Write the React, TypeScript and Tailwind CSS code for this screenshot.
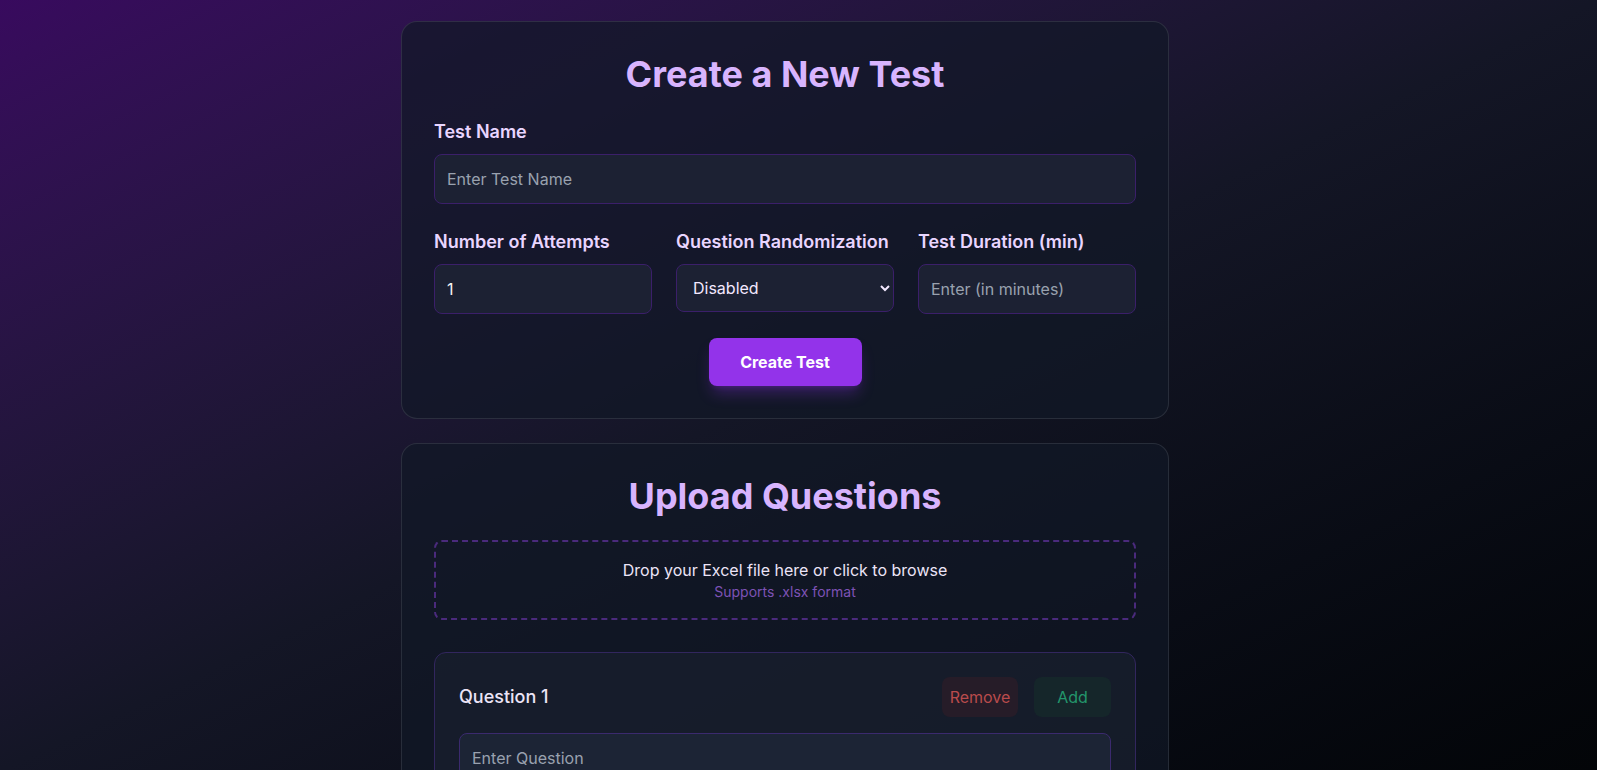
import { useState } from 'react'

const inputCls =
  'w-full rounded-lg border border-[#3b1f6a] bg-[#1c2133] px-3 py-3 text-base text-gray-100 placeholder-gray-400 outline-none'

const labelCls = 'block text-lg font-semibold text-[#e9d5ff] mb-2'

export default function App() {
  // State
  const [testName, setTestName] = useState('')
  const [attempts, setAttempts] = useState('1')
  const [random, setRandom] = useState('disabled')
  const [duration, setDuration] = useState('')
  const [question, setQuestion] = useState('')

  return (
    <div
      className="min-h-screen bg-fixed bg-gradient-to-br from-[#380a5e] via-[#141626] to-[#030508] pr-[27px] pt-[21px] pb-10 flex justify-center"
      style={{ fontFamily: 'Inter, "Noto Sans", sans-serif' }}
    >
      <div className="w-[768px] flex flex-col gap-6">
        {/* Create test card */}
        <div className="rounded-2xl border border-white/10 bg-[#111827]/70 p-8">
          <h1 className="text-4xl font-bold text-[#d8b4fe] text-center mb-6">
            Create a New Test
          </h1>

          <label className={labelCls}>Test Name</label>
          <input
            className={inputCls + ' mb-6'}
            placeholder="Enter Test Name"
            value={testName}
            onChange={(e) => setTestName(e.target.value)}
          />

          <div className="grid grid-cols-3 gap-6 mb-6">
            <div>
              <label className={labelCls}>Number of Attempts</label>
              <input
                type="number"
                className={inputCls}
                value={attempts}
                onChange={(e) => setAttempts(e.target.value)}
              />
            </div>
            <div>
              <label className={labelCls}>Question Randomization</label>
              <select
                className="w-full rounded-lg border border-[#3b1f6a] bg-[#1c2133] px-3 py-3 text-base text-[#f3e8ff] outline-none"
                value={random}
                onChange={(e) => setRandom(e.target.value)}
              >
                <option value="disabled">Disabled</option>
                <option value="enabled">Enabled</option>
              </select>
            </div>
            <div>
              <label className={labelCls}>Test Duration (min)</label>
              <input
                className={inputCls}
                placeholder="Enter (in minutes)"
                value={duration}
                onChange={(e) => setDuration(e.target.value)}
              />
            </div>
          </div>

          <div className="flex justify-center">
            <button className="w-[153px] rounded-lg bg-[#9333ea] py-3 text-base font-bold text-white shadow-lg shadow-[#9333ea]/30">
              Create Test
            </button>
          </div>
        </div>

        {/* Upload card */}
        <div className="rounded-2xl border border-white/10 bg-[#111827]/70 p-8">
          <h2 className="text-4xl font-bold text-[#d8b4fe] text-center mb-6">
            Upload Questions
          </h2>

          <div className="rounded-lg border-2 border-dashed border-[#4a2a7c] p-4 text-center cursor-pointer mb-8">
            <p className="text-base text-[#ece4f7]">
              Drop your Excel file here or click to browse
            </p>
            <p className="text-sm text-[#7d52b5]">Supports .xlsx format</p>
          </div>

          {/* Question block */}
          <div className="rounded-xl border border-[#32265e] bg-[#1b2131]/60 p-6">
            <div className="flex items-center justify-between mb-4">
              <span className="text-lg font-medium text-[#ece4f7]">Question 1</span>
              <div className="flex gap-4">
                <button className="w-[76px] rounded-lg bg-[#261c28] py-2 text-base text-[#b94b4c]">
                  Remove
                </button>
                <button className="w-[77px] rounded-lg bg-[#15262a] py-2 text-base text-[#23966c]">
                  Add
                </button>
              </div>
            </div>
            <input
              className="w-full rounded-lg border border-[#3b2a6e] bg-[#1c2435] px-3 py-3 text-base text-gray-100 placeholder-gray-400 outline-none mb-4"
              placeholder="Enter Question"
              value={question}
              onChange={(e) => setQuestion(e.target.value)}
            />
            <div className="grid grid-cols-2 gap-4">
              {['Option A', 'Option B', 'Option C', 'Option D'].map((o) => (
                <input
                  key={o}
                  className="w-full rounded-lg border border-[#3b2a6e] bg-[#1c2435] px-3 py-3 text-base text-gray-100 placeholder-gray-400 outline-none"
                  placeholder={o}
                />
              ))}
            </div>
          </div>
        </div>
      </div>
    </div>
  )
}
